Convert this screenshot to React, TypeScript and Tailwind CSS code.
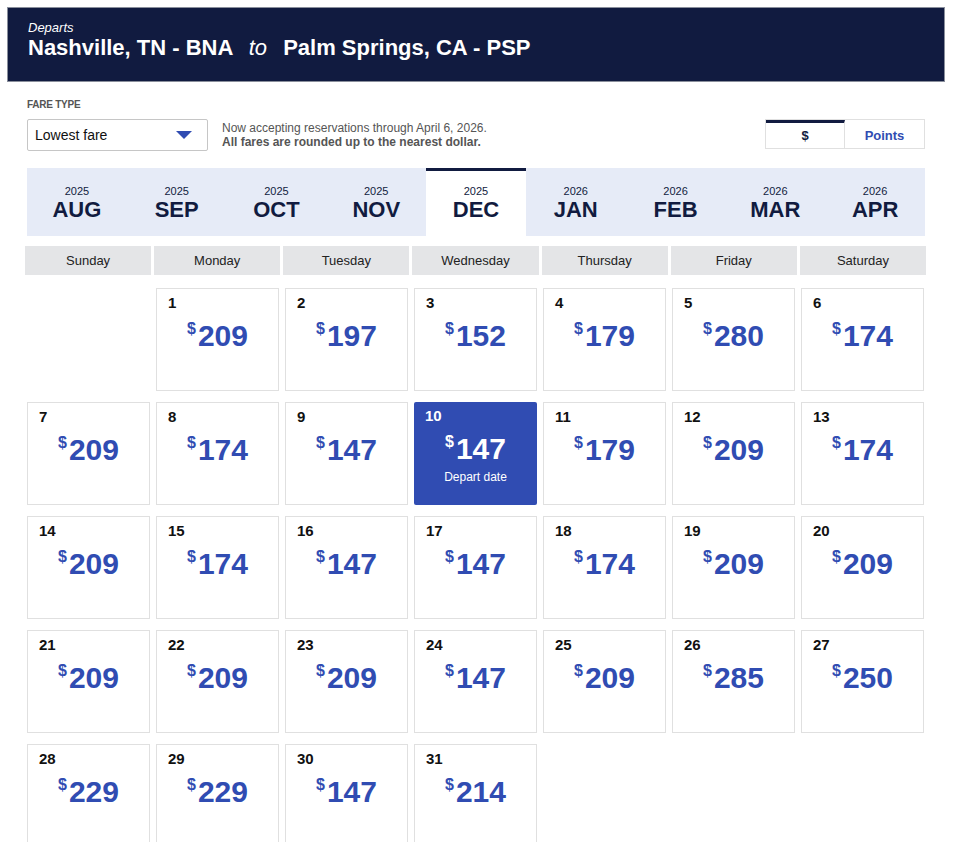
import { useState } from "react";

const months = [
  { year: "2025", name: "AUG" },
  { year: "2025", name: "SEP" },
  { year: "2025", name: "OCT" },
  { year: "2025", name: "NOV" },
  { year: "2025", name: "DEC" },
  { year: "2026", name: "JAN" },
  { year: "2026", name: "FEB" },
  { year: "2026", name: "MAR" },
  { year: "2026", name: "APR" },
];

const weekdays = ["Sunday", "Monday", "Tuesday", "Wednesday", "Thursday", "Friday", "Saturday"];

// December 2025 starts on a Monday
const fares = [
  209, 197, 152, 179, 280, 174, 209, 174, 147, 147, 179, 209, 174, 209, 174, 147, 147, 174, 209,
  209, 209, 209, 209, 147, 209, 285, 250, 229, 229, 147, 214,
];

export default function App() {
  const [selected, setSelected] = useState(10);
  const [currency, setCurrency] = useState("$");

  const cells: (number | null)[] = [null, ...fares.map((_, i) => i + 1)];

  return (
    <div className="min-h-screen bg-white pl-[7px] pr-[9px] pt-[7px] font-['Liberation_Sans',Arial,sans-serif] text-[#111b40]">
      {/* Header */}
      <div className="h-[75px] border border-[#8a8f9c] bg-[#111b40] px-5 pt-[12px] text-white">
        <div className="text-[13px] italic leading-4">Departs</div>
        <h1 className="text-[22px] font-bold leading-6">
          Nashville, TN - BNA <span className="mx-[10px] font-normal italic">to</span> Palm Springs, CA - PSP
        </h1>
      </div>

      <div className="pl-[18px] pr-[19px]">
        {/* Fare type row */}
        <div className="mt-[17px] ml-[2px] text-[10px] font-bold leading-3 tracking-tight text-[#555]">FARE TYPE</div>
        <div className="mt-[8px] ml-[2px] flex items-start">
          <div className="flex h-[32px] w-[181px] items-center justify-between rounded-[2px] border border-[#c6c6c6] pl-[7px] pr-[15px] text-[14px] text-[#111]">
            <span>Lowest fare</span>
            <svg width="16" height="8" viewBox="0 0 16 8">
              <polygon points="0,0 16,0 8,8" fill="#304cb2" />
            </svg>
          </div>
          <div className="ml-[14px] mt-[2px] text-[12px] leading-[14px] text-[#555]">
            <div>Now accepting reservations through April 6, 2026.</div>
            <div className="font-bold">All fares are rounded up to the nearest dollar.</div>
          </div>
          <div className="ml-auto mr-[1px] flex h-[30px] border border-[#e0e0e0] text-[13px] font-bold">
            {["$", "Points"].map((c) => (
              <button
                key={c}
                onClick={() => setCurrency(c)}
                className={
                  "flex w-[79px] items-center justify-center border-t-[3px] " +
                  (c === "$" ? "border-r border-r-[#e0e0e0] " : "") +
                  (currency === c ? "border-t-[#111b40] text-[#111b40]" : "border-t-transparent text-[#304cb2]")
                }
              >
                {c}
              </button>
            ))}
          </div>
        </div>

        {/* Month tabs */}
        <div className="mt-[17px] ml-[2px] mr-[1px] grid h-[68px] grid-cols-9 bg-[#e6ebf7]">
          {months.map((m) => (
            <div
              key={m.name}
              className={
                "flex flex-col items-center " +
                (m.name === "DEC" ? "border-t-[3px] border-[#111b40] bg-white pt-[14px]" : "pt-[17px]")
              }
            >
              <span className="text-[11px] leading-[13px]">{m.year}</span>
              <span className="text-[22px] font-bold leading-[24px]">{m.name}</span>
            </div>
          ))}
        </div>

        {/* Weekday headers */}
        <div className="mt-[10px] grid grid-cols-7 gap-[3px]">
          {weekdays.map((d) => (
            <div key={d} className="flex h-[29px] items-center justify-center bg-[#e4e5e7] text-[13px] text-[#222]">
              {d}
            </div>
          ))}
        </div>

        {/* Calendar */}
        <div className="mt-[13px] ml-[2px] grid w-[897px] grid-cols-7 gap-x-[6px] gap-y-[11px]">
          {cells.map((day, i) =>
            day === null ? (
              <div key={"e" + i} />
            ) : (
              <button
                key={day}
                onClick={() => setSelected(day)}
                className={
                  "flex h-[103px] flex-col items-start pl-[11px] pt-[5px] text-left " +
                  (selected === day
                    ? "rounded-[2px] bg-[#304cb2] text-white"
                    : "border border-[#e0e0e0] bg-white text-[#111]")
                }
              >
                <span className="text-[15px] font-bold leading-[18px]">{day}</span>
                <span
                  className={
                    "mt-[8px] flex w-full justify-center pr-[11px] font-bold " +
                    (selected === day ? "text-white" : "text-[#304cb2]")
                  }
                >
                  <span className="mr-[2px] mt-[1px] text-[16px] leading-4">$</span>
                  <span className="text-[30px] leading-[32px]">{fares[day - 1]}</span>
                </span>
                {selected === day && (
                  <span className="mt-[3px] w-full pr-[11px] text-center text-[12px]">Depart date</span>
                )}
              </button>
            )
          )}
        </div>
      </div>
    </div>
  );
}
